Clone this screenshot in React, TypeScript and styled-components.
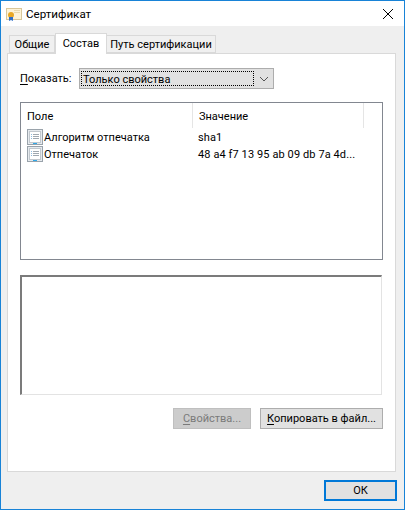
import styled, { createGlobalStyle } from "styled-components";

const GlobalStyle = createGlobalStyle`
  html, body {
    margin: 0;
    padding: 0;
    background: #efefef;
  }
  * {
    box-sizing: border-box;
  }
`;

const Window = styled.div`
  width: 405px;
  height: 510px;
  display: flex;
  flex-direction: column;
  background: #efefef;
  border: 1px solid #1883d7;
  font-family: Roboto, "Open Sans", sans-serif;
  font-size: 11px;
  color: #000;
`;

const TitleBar = styled.div`
  height: 25px;
  display: flex;
  align-items: center;
  background: #fff;
  padding-left: 5px;
  flex: none;
`;

const TitleText = styled.span`
  margin-left: 4px;
  font-size: 11.6px;
`;

const CloseButton = styled.div`
  margin-left: auto;
  margin-right: 11px;
  width: 10px;
  height: 10px;
  display: flex;
`;

const Body = styled.div`
  flex: 1;
  display: flex;
  flex-direction: column;
  padding: 7px 7px 0 6px;
`;

const TabStrip = styled.div`
  height: 20px;
  display: flex;
  align-items: flex-end;
  padding-left: 2px;
  position: relative;
  z-index: 1;
  flex: none;
`;

const Tab = styled.div<{ $active?: boolean; $w: number }>`
  width: ${(p) => p.$w}px;
  height: ${(p) => (p.$active ? 21 : 18)}px;
  margin-bottom: ${(p) => (p.$active ? -1 : 0)}px;
  margin-right: ${(p) => (p.$active ? -1 : 0)}px;
  padding-bottom: ${(p) => (p.$active ? 2 : 0)}px;
  display: flex;
  align-items: center;
  justify-content: center;
  background: ${(p) => (p.$active ? "#fff" : "#f0f0f0")};
  border: 1px solid #d9d9d9;
  border-bottom: ${(p) => (p.$active ? "none" : "1px solid #d9d9d9")};
  white-space: nowrap;
`;

const Panel = styled.div`
  width: 389px;
  height: 419px;
  display: flex;
  flex-direction: column;
  background: #fff;
  border: 1px solid #d9d9d9;
  padding: 14px 0 0 12px;
`;

const ShowRow = styled.div`
  display: flex;
  align-items: center;
  height: 21px;
  flex: none;
`;

const ShowLabel = styled.span`
  width: 59px;
`;

const Mnemonic = styled.span`
  text-decoration: underline;
  text-underline-offset: 2px;
  text-decoration-thickness: 1px;
`;

const Select = styled.div`
  width: 195px;
  height: 21px;
  display: flex;
  align-items: center;
  background: #e1e1e1;
  border: 1px solid #adadad;
  padding: 2px 0 2px 1px;
`;

const SelectValue = styled.div`
  width: 173px;
  height: 15px;
  line-height: 15px;
  padding-left: 1px;
  border: 1px dotted #000;
  white-space: nowrap;
`;

const SelectArrow = styled.div`
  flex: 1;
  display: flex;
  justify-content: center;
`;

const FieldList = styled.div`
  margin-top: 13px;
  width: 363px;
  height: 158px;
  display: flex;
  flex-direction: column;
  background: #fff;
  border: 1px solid #828790;
  flex: none;
`;

const HeaderRow = styled.div`
  height: 25px;
  display: flex;
  flex: none;
`;

const HeaderCell = styled.div<{ $w: number }>`
  width: ${(p) => p.$w}px;
  flex: none;
  display: flex;
  align-items: center;
  padding: 2px 0 0 6px;
  border-right: 1px solid #e5e5e5;
`;

const Row = styled.div`
  height: 17px;
  display: flex;
  align-items: center;
  white-space: nowrap;
  flex: none;
`;

const NameCell = styled.div`
  width: 171px;
  display: flex;
  align-items: center;
  padding-left: 6px;
  gap: 1px;
  flex: none;
`;

const NameText = styled.span`
  padding-top: 2px;
`;

const ValueCell = styled.div`
  padding: 2px 0 0 6px;
  letter-spacing: 0.1px;
`;

const IconSlot = styled.span`
  display: flex;
  flex: none;
`;

const Details = styled.div`
  margin-top: 15px;
  width: 362px;
  height: 120px;
  background: #fff;
  border-top: 2px solid #7b7b7b;
  border-left: 2px solid #7b7b7b;
  border-right: 1px solid #e3e3e3;
  border-bottom: 1px solid #e3e3e3;
  flex: none;
`;

const ButtonRow = styled.div`
  margin-top: 13px;
  width: 363px;
  display: flex;
  justify-content: flex-end;
  gap: 9px;
  flex: none;
`;

const Button = styled.div<{ $disabled?: boolean; $w: number }>`
  width: ${(p) => p.$w}px;
  height: 21px;
  display: flex;
  align-items: center;
  justify-content: center;
  white-space: nowrap;
  background: ${(p) => (p.$disabled ? "#cccccc" : "#e1e1e1")};
  border: 1px solid ${(p) => (p.$disabled ? "#bfbfbf" : "#adadad")};
  color: ${(p) => (p.$disabled ? "#7a7a7a" : "#000")};
`;

const Footer = styled.div`
  flex: 1;
  display: flex;
  justify-content: flex-end;
  align-items: flex-start;
  padding-top: 8px;
`;

const OkButton = styled.div`
  width: 73px;
  height: 21px;
  display: flex;
  align-items: center;
  justify-content: center;
  background: #e1e1e1;
  border: 2px solid #0078d7;
`;

function CertIcon() {
  return (
    <svg width="16" height="16" viewBox="0 0 16 16">
      <rect x="0.5" y="2.5" width="15" height="11" fill="#fdf3d8" stroke="#d9c79a" />
      <rect x="8" y="4" width="6" height="1" fill="#e8d9ae" />
      <rect x="8" y="6" width="6" height="1" fill="#e8d9ae" />
      <circle cx="5" cy="9" r="3" fill="#e9a825" />
      <path d="M3 11h4v4l-2-1-2 1z" fill="#2f6fc9" />
    </svg>
  );
}

function FieldIcon() {
  return (
    <IconSlot>
      <svg width="16" height="16" viewBox="0 0 16 16">
        <rect x="0.5" y="0.5" width="15" height="15" fill="#e6eaee" stroke="#9aa3ab" />
        <rect x="2.5" y="2.5" width="11" height="11" fill="#fff" stroke="#c2c8ce" />
        <path d="M6 5.5h6M6 7.5h6M6 9.5h6" stroke="#a0a8b0" />
        <path d="M4 5.5h1M4 7.5h1M4 9.5h1" stroke="#8dbbe0" />
        <rect x="6" y="14" width="4" height="1" fill="#2fa8e8" />
      </svg>
    </IconSlot>
  );
}

export default function App() {
  return (
    <Window>
      <GlobalStyle />
      <TitleBar>
        <CertIcon />
        <TitleText>Сертификат</TitleText>
        <CloseButton>
          <svg width="10" height="10" viewBox="0 0 10 10">
            <path d="M0 0L10 10M10 0L0 10" stroke="#000" strokeWidth="1" />
          </svg>
        </CloseButton>
      </TitleBar>
      <Body>
        <TabStrip>
          <Tab $w={46}>Общие</Tab>
          <Tab $w={52} $active>
            Состав
          </Tab>
          <Tab $w={110}>Путь сертификации</Tab>
        </TabStrip>
        <Panel>
          <ShowRow>
            <ShowLabel>
              <Mnemonic>П</Mnemonic>оказать:
            </ShowLabel>
            <Select>
              <SelectValue>Только свойства</SelectValue>
              <SelectArrow>
                <svg width="10" height="6" viewBox="0 0 10 6">
                  <path d="M1 1L5 5L9 1" fill="none" stroke="#555" strokeWidth="1" />
                </svg>
              </SelectArrow>
            </Select>
          </ShowRow>
          <FieldList>
            <HeaderRow>
              <HeaderCell $w={172}>Поле</HeaderCell>
              <HeaderCell $w={171}>Значение</HeaderCell>
            </HeaderRow>
            <Row>
              <NameCell>
                <FieldIcon />
                <NameText>Алгоритм отпечатка</NameText>
              </NameCell>
              <ValueCell>sha1</ValueCell>
            </Row>
            <Row>
              <NameCell>
                <FieldIcon />
                <NameText>Отпечаток</NameText>
              </NameCell>
              <ValueCell>48 a4 f7 13 95 ab 09 db 7a 4d...</ValueCell>
            </Row>
          </FieldList>
          <Details />
          <ButtonRow>
            <Button $w={78} $disabled>
              <span>
                <Mnemonic>С</Mnemonic>войства...
              </span>
            </Button>
            <Button $w={123}>
              <span>
                <Mnemonic>К</Mnemonic>опировать в файл...
              </span>
            </Button>
          </ButtonRow>
        </Panel>
        <Footer>
          <OkButton>ОК</OkButton>
        </Footer>
      </Body>
    </Window>
  );
}
